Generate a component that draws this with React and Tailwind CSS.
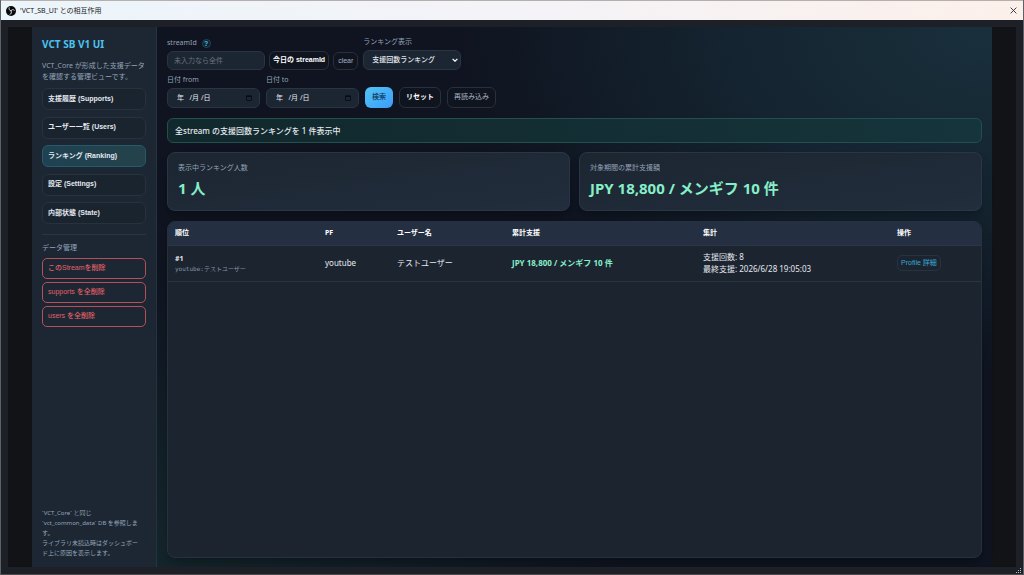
import React from "react";

const navItems = [
  "支援履歴 (Supports)",
  "ユーザー一覧 (Users)",
  "ランキング (Ranking)",
  "設定 (Settings)",
  "内部状態 (State)",
];
const dangerItems = ["このStreamを削除", "supports を全削除", "users を全削除"];
const columns = ["順位", "PF", "ユーザー名", "累計支援", "集計", "操作"];

function ObsIcon() {
  return (
    <svg viewBox="0 0 20 20" className="h-[10px] w-[10px] shrink-0" aria-hidden="true">
      <circle cx="10" cy="10" r="10" fill="#08090b" />
      <g fill="none" stroke="#d8dde2" strokeWidth="1.9" strokeLinecap="round">
        <path d="M6.2 3.6C5.4 6.6 6.9 9.2 10 9.6" />
        <path d="M16.6 8.6C14.4 6.4 11.4 6.6 10 9.6" />
        <path d="M8 16.8C10.8 15.8 12 12.8 10 9.6" />
      </g>
    </svg>
  );
}

function DateField({ id, label }) {
  return (
    <div className="flex flex-col gap-[3px]">
      <label htmlFor={id} className="text-[7px] leading-[10px] text-[#94a3b8]">{label}</label>
      <div className="flex h-5 w-[93px] items-center rounded-md border border-[#2a3542] bg-[#1c2632] pr-[7px] pl-[9px]">
        <input
          id={id}
          type="text"
          placeholder="年   /月 /日"
          className="w-full min-w-0 flex-1 bg-transparent text-[7px] whitespace-pre text-[#e5e9ef] outline-none placeholder:text-[#e5e9ef]"
        />
        <svg viewBox="0 0 12 12" className="h-[6px] w-[6px]" aria-hidden="true">
          <path d="M1 2h10v9H1z" fill="none" stroke="#080b10" strokeWidth="1.6" />
          <path d="M1 1h10v3H1z" fill="#080b10" />
        </svg>
      </div>
    </div>
  );
}

export default function App() {
  return (
    <div className="flex h-screen flex-col border-x border-b border-x-[#5d6266] border-b-[#4f4c50] bg-[#1d2026] font-['Noto_Sans','Noto_Sans_CJK_JP',sans-serif] text-[#e5e9ef] [&_button]:font-['Liberation_Sans','Noto_Sans_CJK_JP',sans-serif]">
      <header className="flex h-5 shrink-0 items-center gap-1 border-t border-[#b5b0ae] bg-linear-to-r from-[#ebf5fa] via-[#f4f3f8] to-[#fcf0ea] px-[5px]">
        <ObsIcon />
        <h1 className="flex-1 text-[7px] leading-[18px] text-[#15181c]">'VCT_SB_UI' との相互作用</h1>
        <button type="button" aria-label="閉じる" className="flex h-4 w-[9px] items-center justify-center">
          <svg viewBox="0 0 8 8" className="h-[7px] w-[7px]">
            <path d="M.7.7l6.6 6.6M7.3.7L.7 7.3" stroke="#25282c" strokeWidth="1" fill="none" />
          </svg>
        </button>
      </header>

      <div className="mx-[7px] mt-[7px] flex min-h-0 flex-1 bg-[#121317] px-6">
        <aside className="flex w-[125px] shrink-0 flex-col border-r border-[#263340] bg-[#1c2733] px-[10px] pt-[11px] pb-[9px]">
          <h2 className="text-[10px] leading-3 font-bold text-[#4cc3ee]">VCT SB V1 UI</h2>
          <p className="mt-[10px] text-[7px] leading-[11px] text-[#94a3b8]">
            VCT_Core が形成した支援データを確認する管理ビューです。
          </p>
          <nav className="mt-[6px] flex h-[136px] flex-col justify-between">
            {navItems.map((item, i) => (
              <button
                key={item}
                type="button"
                className={
                  i === 2
                    ? "h-[22px] rounded-md border border-[#27596b] bg-linear-to-r from-[#1f4252] to-[#23424a] px-[5px] text-left text-[7px] font-bold"
                    : "h-[22px] rounded-md border border-[#27323e] bg-[#1a242f] px-[5px] text-left text-[7px] font-bold"
                }
              >
                {item}
              </button>
            ))}
          </nav>
          <section className="mt-[10px] flex flex-col border-t border-[#2a3542] pt-2">
            <h3 className="text-[7px] leading-[10px] text-[#94a3b8]">データ管理</h3>
            <div className="mt-[5px] flex flex-col gap-[3px]">
              {dangerItems.map((item) => (
                <button
                  key={item}
                  type="button"
                  className="h-[21px] rounded-[5px] border border-[#b5505a] px-[5px] text-left text-[7px] font-medium text-[#e2606a]"
                >
                  {item}
                </button>
              ))}
            </div>
          </section>
          <p className="mt-auto text-[6px] leading-[10px] whitespace-nowrap text-[#94a3b8]">
            `VCT_Core` と同じ
            <br />
            `vct_common_data` DB を参照しま
            <br />
            す。
            <br />
            ライブラリ未読込時はダッシュボー
            <br />
            ド上に原因を表示します。
          </p>
        </aside>

        <main className="flex min-w-0 flex-1 flex-col bg-[#0f1420] bg-[radial-gradient(ellipse_at_100%_0%,#19303c_0%,#142430_22%,transparent_45%),radial-gradient(ellipse_at_0%_100%,#14262b_0%,transparent_40%)] px-[10px] pt-[10px] pb-[9px]">
          <form className="flex flex-col gap-[5px]" onSubmit={(e) => e.preventDefault()}>
            <div className="flex items-end gap-1">
              <div className="flex flex-col gap-[3px]">
                <div className="flex items-center gap-[5px]">
                  <label htmlFor="stream" className="text-[7px] leading-[10px] text-[#94a3b8]">streamId</label>
                  <button type="button" aria-label="streamId のヘルプ" className="flex h-[9px] w-[9px] items-center justify-center rounded-full border border-[#1f4a5e] bg-[#10212e] text-[7px] leading-none font-bold text-[#4cc3ee]">?</button>
                </div>
                <input id="stream" type="text" placeholder="未入力なら全件" className="h-[19px] w-[98px] rounded-md border border-[#2a3542] bg-[#1c2632] px-[6px] text-[7px] outline-none placeholder:text-[#6a717b]" />
              </div>
              <button type="button" className="h-[19px] rounded-md border border-[#27303d] bg-[#10141f] px-[3px] text-[7px] font-bold text-white">今日の streamId</button>
              <button type="button" className="h-[18px] rounded-md border border-[#27303d] bg-[#10141f] px-1 text-[7px] text-[#a6b2c2]">clear</button>
              <div className="ml-px flex flex-col gap-[3px]">
                <label htmlFor="mode" className="text-[7px] leading-[10px] text-[#94a3b8]">ランキング表示</label>
                <div className="relative">
                  <select id="mode" className="block h-5 w-[98px] appearance-none rounded-md border border-[#2a3542] bg-[#1c2632] pl-[8px] text-[7px] font-medium">
                    <option>支援回数ランキング</option>
                  </select>
                  <svg viewBox="0 0 10 6" className="pointer-events-none absolute top-2 right-[3px] h-[4px] w-[6px]" aria-hidden="true">
                    <path d="M1 1l4 4 4-4" fill="none" stroke="#fff" strokeWidth="2" />
                  </svg>
                </div>
              </div>
            </div>
            <div className="flex items-end gap-[6px]">
              <DateField id="from" label="日付 from" />
              <DateField id="to" label="日付 to" />
              <button type="submit" className="h-[21px] rounded-md bg-linear-to-br from-[#52c4f6] to-[#3e9cf8] px-[7px] text-[7px] font-medium text-[#0c3457]">検索</button>
              <button type="button" className="h-[21px] rounded-md border border-[#27303d] bg-[#10141f] px-[6px] text-[7px] font-bold text-white">リセット</button>
              <button type="button" className="h-[21px] rounded-md border border-[#27303d] bg-[#10141f] px-[6px] text-[7px] text-[#a6b2c2]">再読み込み</button>
            </div>
          </form>

          <p role="status" className="mt-[10px] h-[25px] shrink-0 rounded-md border border-[#234f4c] bg-linear-to-r from-[#11282c] to-[#15343b] px-[7px] text-[8px] leading-[23px] font-medium">
            全stream の支援回数ランキングを 1 件表示中
          </p>

          <div className="mt-[9px] grid grid-cols-2 gap-[9px]">
            {[
              ["表示中ランキング人数", "1 人"],
              ["対象期間の累計支援額", "JPY 18,800 / メンギフ 10 件"],
            ].map(([label, value]) => (
              <section key={label} className="h-[59px] rounded-lg border border-[#2a3646] bg-linear-to-br from-[#1c2631] to-[#222d3d] px-[10px] pt-[10px] shadow-lg shadow-black/20">
                <h3 className="text-[7px] leading-[10px] text-[#94a3b8]">{label}</h3>
                <p className="mt-[5px] text-[15px] leading-5 font-bold text-[#86efc8]">{value}</p>
              </section>
            ))}
          </div>

          <div className="mt-[10px] min-h-0 flex-1 overflow-hidden rounded-lg border border-[#26313f] bg-[#1c2430] shadow-lg shadow-black/20">
            <table className="w-full table-fixed border-collapse text-left text-[8px]">
              <colgroup>
                <col className="w-[150px]" />
                <col className="w-[72px]" />
                <col className="w-[115px]" />
                <col className="w-[191px]" />
                <col className="w-[194px]" />
                <col className="w-[92px]" />
              </colgroup>
              <thead className="bg-[#242f41]">
                <tr className="h-[23px] border-b border-[#2a3646]">
                  {columns.map((c) => (
                    <th key={c} className="px-[7px] text-[7px] font-bold text-white">{c}</th>
                  ))}
                </tr>
              </thead>
              <tbody>
                <tr className="h-9 border-b border-[#2a3542]">
                  <td className="px-[7px]">
                    <div className="text-[7px] leading-[11px] font-bold">#1</div>
                    <div className="font-['DejaVu_Sans_Mono','Noto_Sans_CJK_JP',monospace] text-[6px] leading-[10px] text-[#8291a5]">youtube:テストユーザー</div>
                  </td>
                  <td className="px-[7px]">youtube</td>
                  <td className="px-[7px]">テストユーザー</td>
                  <td className="px-[7px] text-[8px] font-bold text-[#86efc8]">JPY 18,800 / メンギフ 10 件</td>
                  <td className="px-[7px] leading-3">
                    <div>支援回数: 8</div>
                    <div>最終支援: 2026/6/28 19:05:03</div>
                  </td>
                  <td className="px-[7px]">
                    <button type="button" className="h-4 rounded-[5px] border border-[#27343f] px-[3px] text-[7px] whitespace-nowrap text-[#38a9d6]">Profile 詳細</button>
                  </td>
                </tr>
              </tbody>
            </table>
          </div>
        </main>
      </div>

      <footer className="flex h-[7px] shrink-0 items-end justify-end bg-[#1d2026] pr-px">
        <svg viewBox="0 0 6 6" className="h-[6px] w-[6px]" aria-hidden="true">
          <path d="M4 0h1v1H4zM2 2h1v1H2zM4 2h1v1H4zM0 4h1v1H0zM2 4h1v1H2zM4 4h1v1H4z" fill="#b9bcc0" />
        </svg>
      </footer>
    </div>
  );
}
